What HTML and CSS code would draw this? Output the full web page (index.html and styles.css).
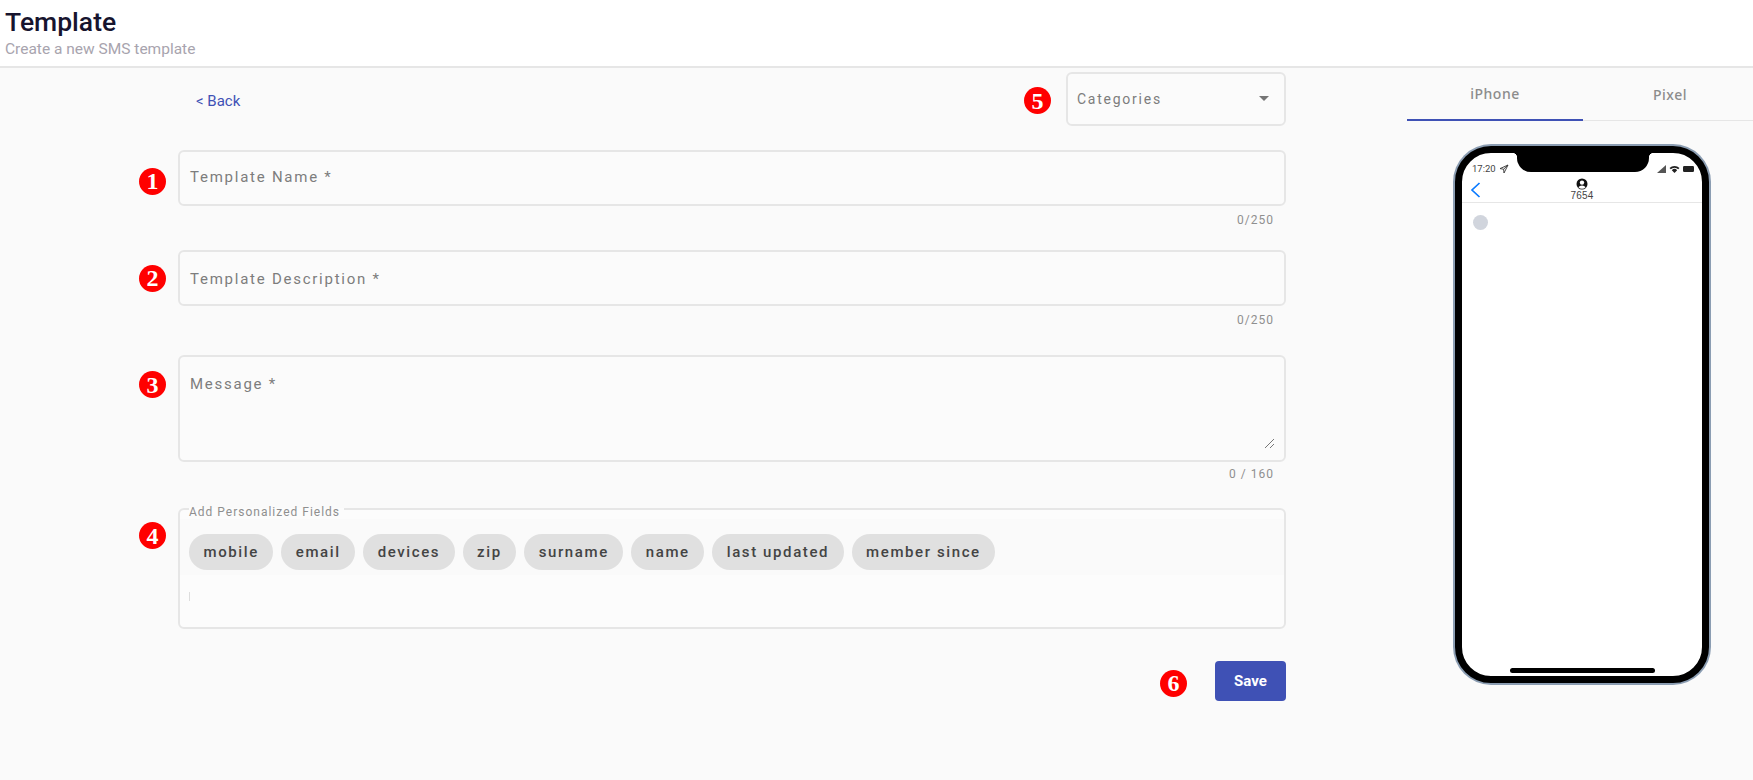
FILE: index.html
```html
<!DOCTYPE html>
<html lang="en">
<head>
  <meta charset="UTF-8" />
  <title>Template</title>
  <link rel="stylesheet" href="styles.css">
</head>
<body>

  <header class="page-header">
    <h1>Template</h1>
    <p>Create a new SMS template</p>
  </header>

  <main class="page-main">

    <section class="form-pane">
      <div class="top-row">
        <a class="back-link" href="#">&lt; Back</a>
        <span class="badge">5</span>
        <div class="box select-box">
          <span class="box-label">Categories</span>
          <span class="caret"></span>
        </div>
      </div>

      <div class="form-row row-name">
        <span class="badge badge-name">1</span>
        <div class="box input-box"><span class="box-label">Template Name *</span></div>
      </div>
      <div class="counter">0/250</div>

      <div class="form-row row-desc">
        <span class="badge">2</span>
        <div class="box input-box input-desc"><span class="box-label">Template Description *</span></div>
      </div>
      <div class="counter">0/250</div>

      <div class="form-row row-message">
        <span class="badge badge-top">3</span>
        <div class="box message-box">
          <span class="box-label">Message *</span>
          <svg class="resize-handle" width="11" height="11" viewBox="0 0 11 11">
            <path d="M1 10 L10 1 M6 10 L10 6" stroke="#777" stroke-width="1" fill="none" />
          </svg>
        </div>
      </div>
      <div class="counter counter-message">0 / 160</div>

      <div class="form-row row-fields">
        <span class="badge badge-fields">4</span>
        <fieldset class="fields-box">
          <legend>Add Personalized Fields</legend>
          <div class="chips">
            <span class="chip">mobile</span>
            <span class="chip">email</span>
            <span class="chip">devices</span>
            <span class="chip">zip</span>
            <span class="chip">surname</span>
            <span class="chip">name</span>
            <span class="chip">last updated</span>
            <span class="chip">member since</span>
          </div>
          <div class="fields-input"><span class="fields-cursor"></span></div>
        </fieldset>
      </div>

      <div class="save-row">
        <span class="badge badge-save">6</span>
        <button class="save-button">Save</button>
      </div>
    </section>

    <aside class="preview-pane">
      <div class="tabs">
        <div class="tab tab-active">iPhone</div>
        <div class="tab">Pixel</div>
      </div>

      <div class="phone">
        <div class="notch"></div>
        <div class="status-bar">
          <span class="status-time">17:20</span>
          <svg width="10" height="10" viewBox="0 0 10 10">
            <path d="M9 1 L1 4.6 L4.6 5.2 L5 9 Z M9 1 L4.6 5.2" fill="none" stroke="#333" stroke-width="0.9" />
          </svg>
          <span class="status-space"></span>
          <svg width="9" height="8" viewBox="0 0 9 8">
            <path d="M0 8 L9 0 V8 Z" fill="#555" />
          </svg>
          <svg width="11" height="8" viewBox="0 0 11 8">
            <path d="M0.5 3 A7 7 0 0 1 10.5 3 L9.2 4.3 A5.2 5.2 0 0 0 1.8 4.3 Z M2.8 5.2 A3.8 3.8 0 0 1 8.2 5.2 L5.5 8 Z" fill="#222" />
          </svg>
          <svg width="11" height="6" viewBox="0 0 11 6">
            <rect x="0" y="0" width="11" height="6" rx="1.2" fill="#222" />
          </svg>
        </div>
        <div class="nav-bar">
          <svg class="nav-back" width="11" height="16" viewBox="0 0 11 16">
            <path d="M9.5 1 L2 8 L9.5 15" fill="none" stroke="#0a7aff" stroke-width="1.7" />
          </svg>
          <div class="contact">
            <svg width="12" height="12" viewBox="0 0 12 12">
              <circle cx="6" cy="6" r="5.5" fill="#111" />
              <circle cx="6" cy="4.6" r="2.2" fill="#fff" />
              <path d="M2.4 9.2 A4 3 0 0 1 9.6 9.2 A5 5 0 0 1 2.4 9.2 Z" fill="#fff" />
            </svg>
            <span>7654</span>
          </div>
        </div>
        <div class="messages"><span class="typing-dot"></span></div>
        <div class="home-bar"></div>
      </div>
    </aside>

  </main>

</body>
</html>
```

FILE: styles.css
```css
* {
  box-sizing: border-box;
}

body {
  margin: 0;
  height: 780px;
  overflow: hidden;
  background: #fafafa;
  font-family: Roboto, sans-serif;
  color: #444;
}

/* Header */
.page-header {
  height: 68px;
  padding: 6px 5px 0;
  background: #fff;
  border-bottom: 2px solid #e6e6e6;
}

.page-header h1 {
  margin: 0;
  font-size: 26.5px;
  line-height: 32px;
  font-weight: 500;
  color: #17142e;
}

.page-header p {
  margin: 2px 0 0;
  font-size: 15.5px;
  line-height: 18px;
  color: #a8a4ae;
}

.page-main {
  display: flex;
}

/* Form */
.form-pane {
  width: 1286px;
  padding-left: 139px;
}

.top-row {
  display: flex;
  align-items: center;
  margin-top: 4px;
  height: 53px;
}

.back-link {
  margin-top: 4px;
  margin-left: 57px;
  margin-right: auto;
  font-size: 15px;
  color: #3f51b5;
  text-decoration: none;
}

.top-row .badge {
  margin-top: 4px;
  margin-right: 15px;
}

.badge {
  display: flex;
  align-items: center;
  justify-content: center;
  flex: none;
  width: 27px;
  height: 27px;
  border-radius: 50%;
  background: #f00;
  color: #fff;
  font-family: "Liberation Serif", serif;
  font-size: 24px;
  font-weight: 700;
  line-height: 1;
}

.box {
  background: #fbfbfb;
  border: 2px solid #e6e6e6;
  border-radius: 6px;
}

.box-label {
  font-size: 15px;
  letter-spacing: 1.75px;
  color: #7d7d7d;
}

.select-box {
  display: flex;
  align-items: center;
  justify-content: space-between;
  width: 220px;
  height: 54px;
  padding: 0 10px 0 9px;
}

.select-box .box-label {
  font-size: 14px;
}

.caret {
  width: 0;
  height: 0;
  margin-right: 5px;
  border-left: 5.5px solid transparent;
  border-right: 5.5px solid transparent;
  border-top: 5.5px solid #757575;
}

.form-row {
  display: flex;
  align-items: center;
  gap: 12px;
}

.row-name {
  margin-top: 25px;
}

.row-desc {
  margin-top: 22px;
}

.row-message {
  margin-top: 27px;
  align-items: flex-start;
}

.row-fields {
  margin-top: 17px;
  align-items: flex-start;
}

.badge-name {
  margin-top: 6px;
}

.input-box {
  display: flex;
  align-items: center;
  flex: 1;
  height: 56px;
  padding: 0 10px 2px;
}

.input-desc {
  padding: 2px 10px 0;
}

.message-box {
  position: relative;
  flex: 1;
  height: 107px;
  padding: 17px 10px;
}

.badge-top {
  margin-top: 16px;
}

.resize-handle {
  position: absolute;
  right: 9px;
  bottom: 11px;
}

.counter {
  height: 22px;
  padding: 6px 12px 0 0;
  text-align: right;
  font-size: 12px;
  line-height: 16px;
  letter-spacing: 1px;
  color: #8f8f8f;
}

.counter-message {
  height: 20px;
  padding-top: 4px;
}

/* Personalized fields */
.fields-box {
  flex: 1;
  min-width: 0;
  height: 130px;
  margin: 0;
  padding: 0;
  background: #fcfcfc;
  border: 2px solid #e6e6e6;
  border-radius: 6px;
}

/* padding-top desce o texto em relação à linha da borda */
.fields-box legend {
  margin-left: 9px;
  padding: 6px 4px 0 0;
  font-size: 12px;
  line-height: 14px;
  letter-spacing: 1px;
  color: #8f8f8f;
}

.badge-fields {
  margin-top: 23px;
}

.chips {
  display: flex;
  gap: 8px;
  height: 56px;
  padding: 15px 9px 0;
  background: #fafafa;
}

.chip {
  display: flex;
  align-items: center;
  height: 36px;
  padding: 0 14.5px;
  border-radius: 18px;
  background: #e0e0e0;
  font-size: 15px;
  font-weight: 500;
  letter-spacing: 1.6px;
  color: #444;
}

.fields-input {
  padding: 17px 9px 0;
}

.fields-cursor {
  display: block;
  width: 1px;
  height: 9px;
  background: #ddd;
}

.save-row {
  display: flex;
  align-items: center;
  justify-content: flex-end;
  gap: 28px;
  margin-top: 32px;
}

.badge-save {
  margin-top: 4px;
}

.save-button {
  width: 71px;
  height: 40px;
  border: none;
  border-radius: 4px;
  background: #3f51b5;
  color: #fff;
  font-family: Roboto, sans-serif;
  font-size: 15px;
  font-weight: 700;
  cursor: pointer;
}

/* Preview */
.preview-pane {
  flex: 1;
  margin-left: 121px;
}

.tabs {
  display: flex;
  height: 53px;
  border-bottom: 1px solid #e6e6e6;
}

.tab {
  flex: 1;
  display: flex;
  align-items: center;
  justify-content: center;
  padding-left: 4px;
  font-family: "Noto Sans", sans-serif;
  font-size: 14px;
  font-weight: 500;
  letter-spacing: 0.5px;
  color: #8c8c8c;
}

.tab-active {
  flex: none;
  width: 176px;
  height: 53px;
  padding-left: 0;
  border-bottom: 2px solid #3f51b5;
}

.phone {
  position: relative;
  display: flex;
  flex-direction: column;
  width: 254px;
  height: 537px;
  margin: 25px 0 0 48px;
  background: #fff;
  border: 7px solid #000;
  border-radius: 36px;
  box-shadow: 0 0 0 2px #8b9db2;
  overflow: hidden;
}

.notch {
  position: absolute;
  top: 0;
  left: 55px;
  width: 132px;
  height: 19px;
  background: #000;
  border-radius: 0 0 14px 14px;
}

/* cantos pequenos onde o notch encontra a borda */
.notch::before,
.notch::after {
  content: "";
  position: absolute;
  top: 0;
  width: 5px;
  height: 5px;
}

.notch::before {
  left: -5px;
  background: radial-gradient(circle at 0 100%, transparent 5px, #000 5.5px);
}

.notch::after {
  right: -5px;
  background: radial-gradient(circle at 100% 100%, transparent 5px, #000 5.5px);
}

.status-bar {
  display: flex;
  align-items: center;
  gap: 3px;
  height: 22px;
  padding: 9px 8px 0 10px;
  font-size: 9.5px;
  color: #444;
}

.status-space {
  flex: 1;
}

.nav-bar {
  position: relative;
  display: flex;
  justify-content: center;
  height: 28px;
  padding-top: 3px;
  border-bottom: 1px solid #e6e6e6;
}

.nav-back {
  position: absolute;
  left: 8px;
  top: 7px;
}

.contact {
  display: flex;
  flex-direction: column;
  align-items: center;
  font-family: "Liberation Sans", sans-serif;
  font-size: 10px;
  line-height: 11px;
  letter-spacing: 0.2px;
}

.messages {
  flex: 1;
  padding: 12px 11px;
}

.typing-dot {
  display: block;
  width: 15px;
  height: 15px;
  border-radius: 50%;
  background: #d1d5dd;
}

.home-bar {
  align-self: center;
  width: 145px;
  height: 5px;
  margin-bottom: 3px;
  border-radius: 3px;
  background: #000;
}
```
